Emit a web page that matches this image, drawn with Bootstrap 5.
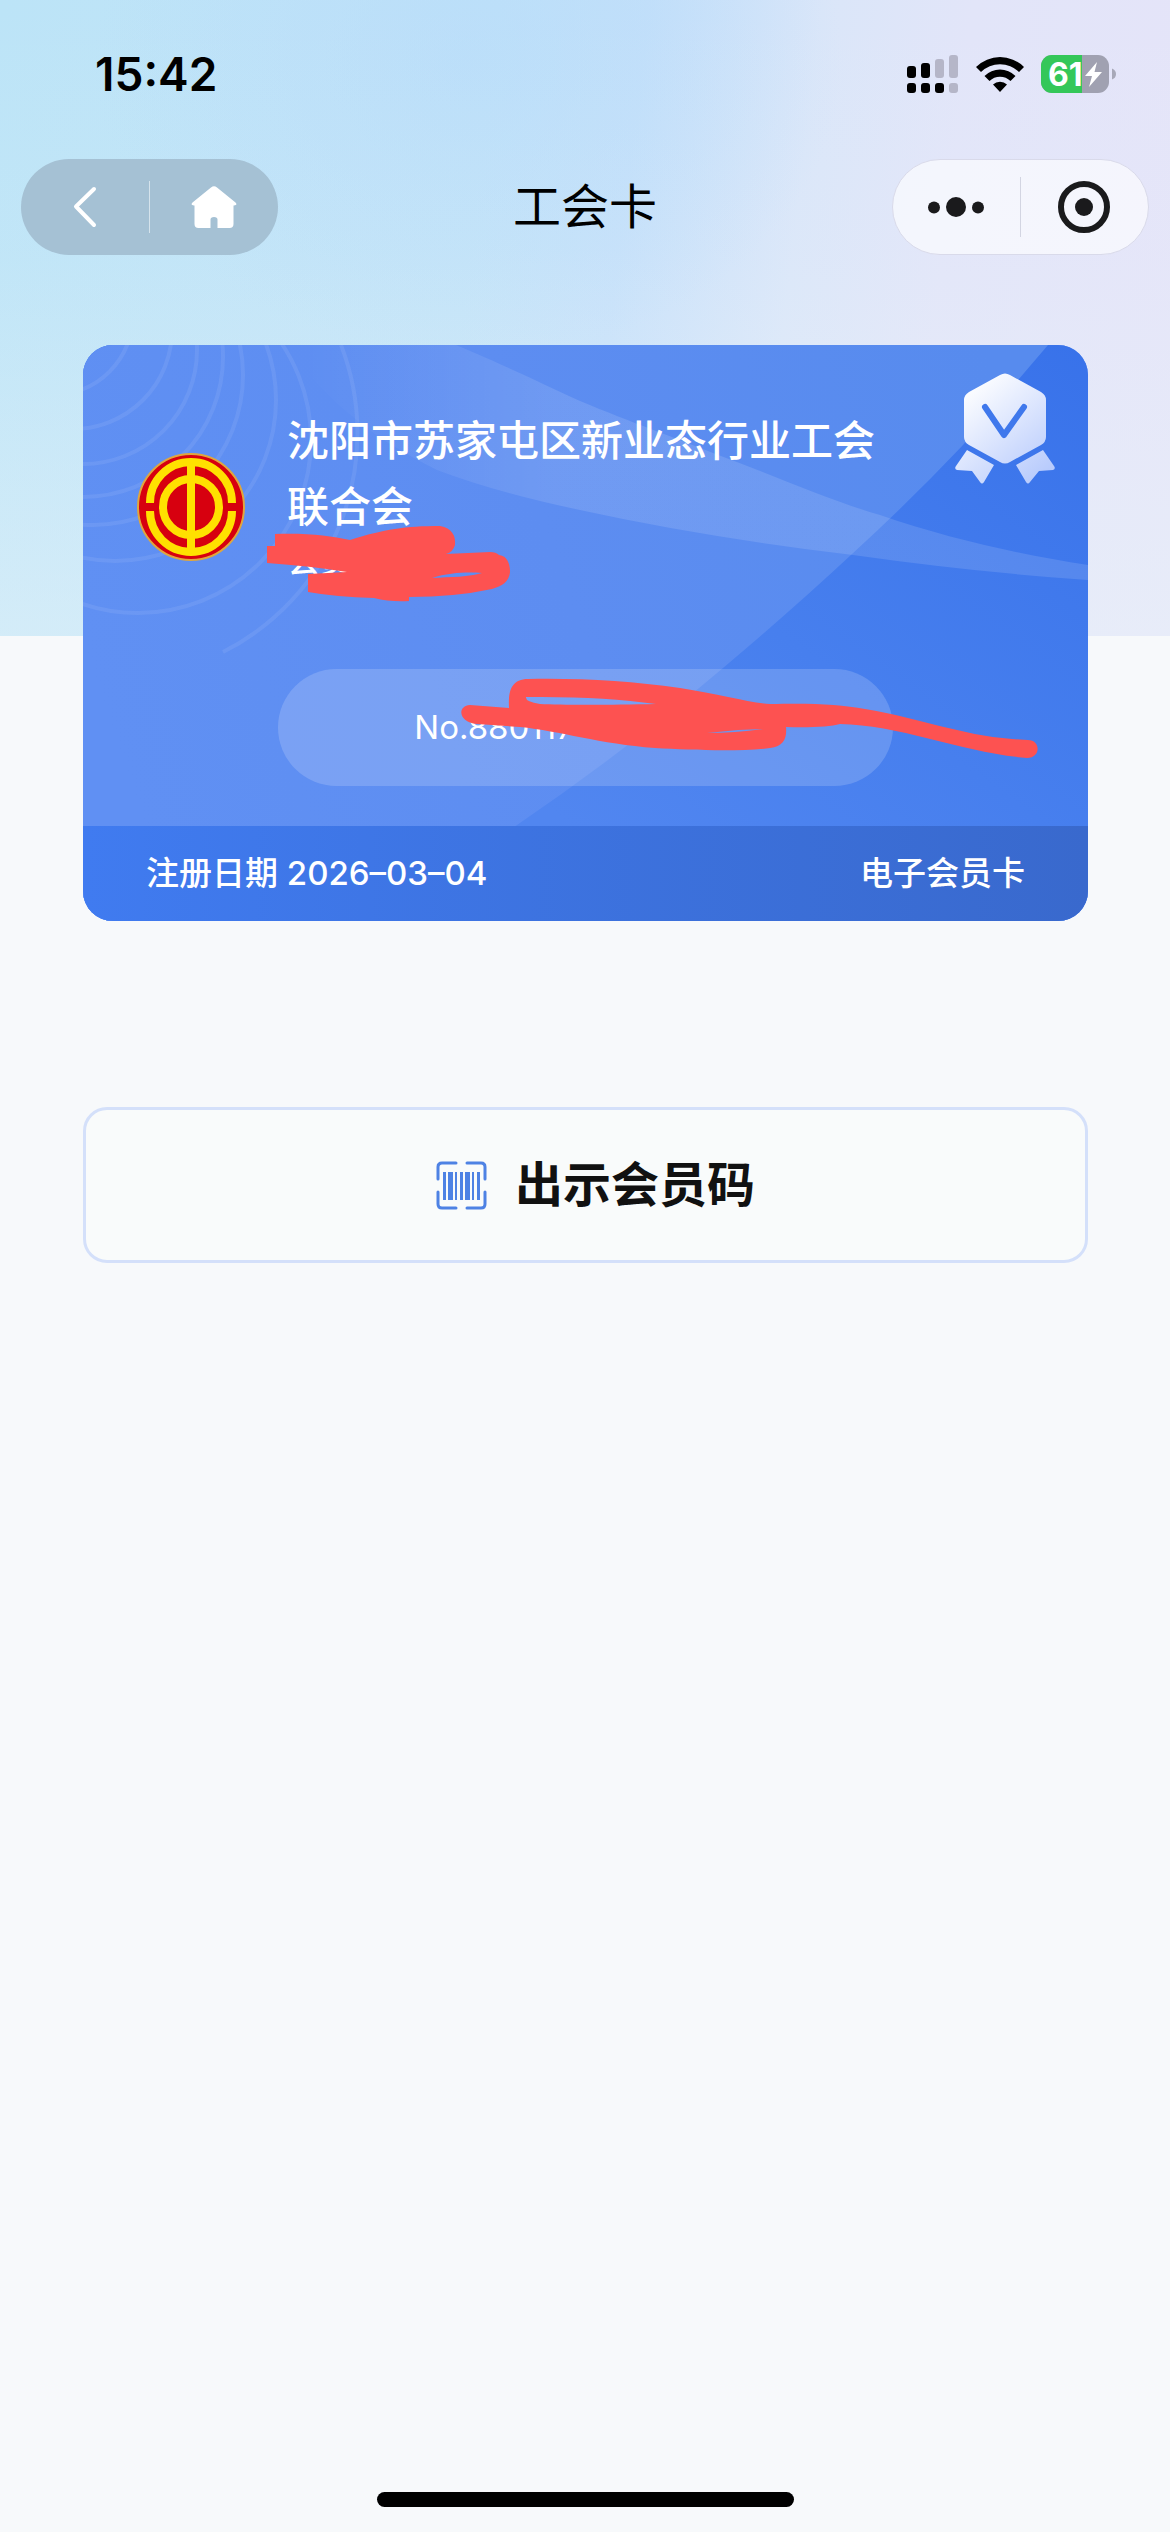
<!DOCTYPE html>
<html lang="zh-CN">
<head>
<meta charset="utf-8">
<meta name="viewport" content="width=device-width, initial-scale=1">
<title>工会卡</title>
<link href="https://cdn.jsdelivr.net/npm/bootstrap@5.3.0/dist/css/bootstrap.min.css" rel="stylesheet">
<style>
  body { background: #f7f9fb; font-family: Inter, "Noto Sans CJK SC", sans-serif; color: #000; }
  svg { display: block; flex-shrink: 0; }
  .screen { min-height: 100vh; background: linear-gradient(180deg, rgba(234,244,249,0) 0, rgba(234,244,249,.1) 250px, rgba(234,244,249,.5) 636px) 0 0 / 100% 636px no-repeat,
    radial-gradient(ellipse 32% 300px at 40% 60px, rgba(184,220,250,.7), rgba(184,220,250,0)) 0 0 / 100% 636px no-repeat,
    linear-gradient(97deg, #bce4f7 0, #c1e3f8 40%, #c5e0fa 52%, #dae6f9 66%, #e2e5f9 78%, #e5e4f9 100%) 0 0 / 100% 636px no-repeat; }
  .status { height: 148px; padding: 0 54px 0 95px; }
  .clock { font-size: 46px; font-weight: 600; }
  .signals { gap: 17px; }
  .topbar { height: 118px; padding: 0 21px; }
  .capsule { width: 257px; height: 96px; border-radius: 48px; }
  .capsule-dim { background: #a5c1d4; }
  .capsule-light { background: rgba(255,255,255,.62); border: 1px solid #d9daea; }
  .capsule .btn { flex: 1 1 0; border: 0; border-radius: 0; height: 60px; }
  .split { width: 1px; height: 60px; background: #d3d5e2; }
  .capsule-dim .split { height: 52px; background: #d5e3ec; }
  .page-name { font-size: 48px; line-height: 64px; font-weight: 400; }
  main { padding: 79px 82px 0 83px; }
  .member { border-radius: 30px; background: #5f90f2; color: #fff; overflow: hidden; margin-bottom: 186px; }
  .member-art { position: absolute; inset: 0; width: 100%; height: 100%; }
  .member-top { padding: 63px 54px 40px; gap: 63px; }
  .who { gap: 42px; padding-right: 130px; }
  .union { font-size: 42px; line-height: 66px; font-weight: 500; }
  .person { font-size: 33px; line-height: 40px; padding-bottom: 26px; font-weight: 500; }
  .serial { width: 615px; max-width: 100%; height: 117px; border-radius: 59px; background: rgba(255,255,255,.17); font-size: 33px; }
  .member-foot { height: 95px; padding: 0 63px; font-size: 33px; background: linear-gradient(90deg, #407bf0, #3969cd); font-weight: 500; }
  .medal { position: absolute; right: 33px; top: 28px; }
  .show-code { height: 156px; padding: 0 0 0 20px; border: 3px solid #d4e0fa; border-radius: 24px; background: #f9fbfb; gap: 28px; font-size: 48px; font-weight: 700; color: #111; }
  .home-line { width: 417px; height: 15px; border-radius: 8px; background: #000; margin-bottom: 25px; }
</style>
</head>
<body>
<div class="screen d-flex flex-column">
  <div class="status d-flex align-items-center justify-content-between">
    <span class="clock">15:42</span>
    <div class="signals d-flex align-items-center">
      <svg width="52" height="38" viewBox="0 0 52 38" aria-label="信号">
        <g fill="#000"><rect x="0" y="11" width="9" height="12" rx="3"/><rect x="14" y="8" width="9" height="15" rx="3"/><rect x="0" y="28" width="9" height="10" rx="3"/><rect x="14" y="28" width="9" height="10" rx="3"/><rect x="28" y="28" width="9" height="10" rx="3"/></g>
        <g fill="#b5b6c8"><rect x="28" y="4" width="9" height="19" rx="3"/><rect x="42" y="0" width="9" height="23" rx="3"/><rect x="42" y="28" width="9" height="10" rx="3"/></g>
      </svg>
      <svg width="48" height="36" viewBox="0 0 48 36" aria-label="无线网络">
        <path d="M0 11A34 34 0 0 1 48 11L43 16A27 27 0 0 0 5 16ZM8.500 20A22 22 0 0 1 39.500 20L34.500 25A15 15 0 0 0 13.500 25ZM17 28.500A10 10 0 0 1 31 28.500L24 36Z"/>
      </svg>
      <svg width="75" height="38" viewBox="0 0 75 38" aria-label="电量 61%">
        <defs><clipPath id="cell"><rect width="68" height="38" rx="11"/></clipPath></defs>
        <g clip-path="url(#cell)"><rect width="68" height="38" fill="#a0a1b1"/><rect width="41" height="38" fill="#34c759"/></g>
        <path d="M71 13.500Q75 15 75 19T71 24.500Z" fill="#a7a8b8"/>
        <text x="7" y="31" font-family="Inter" font-weight="700" font-size="32" fill="#fff">61</text>
        <path d="M56 7L44 21H51L48 32L61 17H53.500Z" fill="#fff"/>
      </svg>
    </div>
  </div>

  <header class="topbar d-flex align-items-center justify-content-between">
    <nav class="capsule capsule-dim d-flex align-items-center" aria-label="导航">
      <button class="btn p-0 d-flex align-items-center justify-content-center" aria-label="返回">
        <svg width="24" height="42" viewBox="0 0 24 42"><path d="M21 3L3 20.500L21 39" fill="none" stroke="#fff" stroke-width="4" stroke-linecap="round" stroke-linejoin="round"/></svg>
      </button>
      <span class="split"></span>
      <button class="btn p-0 d-flex align-items-center justify-content-center" aria-label="首页">
        <svg width="46" height="42" viewBox="0 0 46 42"><path d="M20 1.500Q23 -1 26 1.500L44.500 16.500Q47 19.500 43 19.500H42.500V38Q42.500 42 38.500 42H26.500V33.500Q26.500 31 23 31T19.500 33.500V42H7.500Q3.500 42 3.500 38V19.500H3Q-1 19.500 1.500 16.500Z" fill="#fff"/></svg>
      </button>
    </nav>
    <h1 class="page-name m-0">工会卡</h1>
    <div class="capsule capsule-light d-flex align-items-center">
      <button class="btn p-0 d-flex align-items-center justify-content-center" aria-label="更多">
        <svg width="56" height="20" viewBox="0 0 56 20" fill="#1a1a1c"><circle cx="6" cy="10.500" r="6"/><circle cx="28" cy="10" r="10"/><circle cx="50" cy="10.500" r="6"/></svg>
      </button>
      <span class="split"></span>
      <button class="btn p-0 d-flex align-items-center justify-content-center" aria-label="关闭">
        <svg width="52" height="52" viewBox="0 0 52 52"><circle cx="26" cy="26" r="23" fill="none" stroke="#1a1a1c" stroke-width="6"/><circle cx="26" cy="26" r="9" fill="#1a1a1c"/></svg>
      </button>
    </div>
  </header>

  <main class="flex-grow-1">
    <section class="member position-relative">
      <svg class="member-art" viewBox="0 0 1005 576" preserveAspectRatio="none" aria-hidden="true">
        <defs>
          <linearGradient id="deep" x1="1005" y1="0" x2="600" y2="560" gradientUnits="userSpaceOnUse"><stop offset="0" stop-color="#3872ea"/><stop offset=".6" stop-color="#477fee"/><stop offset="1" stop-color="#5186f0"/></linearGradient>
          <linearGradient id="pale" x1="0" y1="300" x2="900" y2="0" gradientUnits="userSpaceOnUse"><stop offset="0" stop-color="#6090f3"/><stop offset=".5" stop-color="#5d8df1"/><stop offset="1" stop-color="#578bee"/></linearGradient>
          <linearGradient id="sweep" x1="220" y1="0" x2="480" y2="0" gradientUnits="userSpaceOnUse"><stop offset="0" stop-color="#fff" stop-opacity="0"/><stop offset="1" stop-color="#fff" stop-opacity=".12"/></linearGradient>
        </defs>
        <rect width="1005" height="576" fill="url(#deep)"/>
        <path d="M0 0H965Q900 76 880 100Q825 158 769 209Q710 264 640 323Q540 408 434 480L300 576H0Z" fill="url(#pale)"/>
        <path d="M373 0C430 24 460 39 497 56C550 78 590 92 630 108C690 130 745 155 797 170C870 195 940 210 1005 220V235Q890 227 770 210Q620 192 497 165Q415 148 354 125Q300 98 270 72Q225 35 205 0Z" fill="url(#sweep)"/>
        <g fill="none" stroke="#fff" stroke-opacity=".08" stroke-width="4">
          <circle cx="-30" cy="-30" r="80"/><circle cx="-10" cy="-15" r="99"/><circle cx="0" cy="5" r="114"/><circle cx="0" cy="12" r="140"/><circle cx="10" cy="30" r="150"/><circle cx="32" cy="55" r="161"/><circle cx="55" cy="95" r="173"/>
          <path d="M258 0A245 245 0 0 1 140 307"/>
        </g>
      </svg>
      <div class="member-top position-relative d-flex flex-column align-items-center">
        <div class="who d-flex align-items-center w-100">
          <svg width="108" height="108" viewBox="0 0 108 108" aria-label="工会会徽">
            <circle cx="54" cy="54" r="53" fill="#d7000f" stroke="#e0a63c" stroke-width="2"/>
            <g fill="none" stroke="#ffe100" stroke-width="8">
              <circle cx="54" cy="54" r="28"/>
              <path d="M13 50A41 41 0 0 1 95 50M13 58A41 41 0 0 0 95 58"/>
              <path d="M54 12V96"/>
            </g>
          </svg>
          <div>
            <div class="union">沈阳市苏家屯区新业态行业工会联合会</div>
            <div class="person">会员</div>
          </div>
        </div>
        <div class="serial d-flex align-items-center justify-content-center">No.880117***********</div>
      </div>
      <div class="member-foot position-relative d-flex align-items-center justify-content-between">
        <span>注册日期 2026–03–04</span>
        <span>电子会员卡</span>
      </div>
      <svg class="medal" width="100" height="112" viewBox="0 0 100 112" aria-label="认证">
        <defs><linearGradient id="silver" x1="15" y1="10" x2="90" y2="100" gradientUnits="userSpaceOnUse"><stop offset="0" stop-color="#fff"/><stop offset="1" stop-color="#b8cbfc"/></linearGradient></defs>
        <path d="M45 2Q50 -1 55 2L86 19Q91 22 91 27V64Q91 69 86 72L55 89Q50 92 45 89L14 72Q9 69 9 64V27Q9 22 14 19ZM12 77L39 92L29 109Q27 112 25 109L17 98L2 97Q-1 96 1 93ZM88 77L61 92L71 109Q73 112 75 109L84 98L98 97Q101 96 99 93Z" fill="url(#silver)"/>
        <path d="M30 34L49 62L69 34" fill="none" stroke="#3f78ec" stroke-width="6" stroke-linecap="round" stroke-linejoin="round"/>
      </svg>
      <svg class="member-art pe-none" viewBox="83 345 1005 576" preserveAspectRatio="none" aria-hidden="true" fill="#fd5251" fill-rule="evenodd">
        <path d="M267 546H275V534C310 533 330 536 350 540C385 529 405 526 440 526C452 528 456 536 455 545Q453 552 446 554L490 552Q496 552 499 555C508 556 510 565 510 572C509 582 502 586 492 589Q455 597 409 597V601Q390 602 374 598Q336 597 308 592V574Q328 573 347 572Q310 566 267 563ZM432 578C450 572 470 572 482 573C470 577 450 577 432 578Z"/>
        <path d="M470 705L509 708C508 690 512 679 528 679C580 678 630 681 680 688C720 694 750 703 770 704C810 703 840 704 865 709C920 718 960 735 1012 739L1028 740C1041 740 1041 758 1027 758C965 753 900 725 840 724Q825 728 786 727C787 738 784 746 770 748C740 752 690 750 655 748C600 744 560 731 520 727L477 724C458 722 457 706 470 705ZM526 697Q600 696 656 704C610 705 560 705 540 704Q525 702 526 697ZM707 733Q735 733 763 729L738 730Z"/>
      </svg>
    </section>

    <button class="show-code btn w-100 d-flex align-items-center justify-content-center">
      <svg width="51" height="49" viewBox="0 0 51 49" aria-hidden="true">
        <path d="M20 2H6Q2 2 2 6V18M31 2H45Q49 2 49 6V18M2 31V43Q2 47 6 47H20M49 31V43Q49 47 45 47H31" fill="none" stroke="#4e82e4" stroke-width="3" stroke-linecap="round"/>
        <path d="M7 11h3v28h-3zM12 11h5v28h-5zM19 11h2v28h-2zM24 11h3v28h-3zM29 11h5v28h-5zM36 11h2v28h-2zM41 11h3v28h-3z" fill="#4e82e4"/>
      </svg>
      <span>出示会员码</span>
    </button>
  </main>
  <div class="home-line mx-auto"></div>
</div>
<script src="https://cdn.jsdelivr.net/npm/bootstrap@5.3.0/dist/js/bootstrap.bundle.min.js"></script>
</body>
</html>
